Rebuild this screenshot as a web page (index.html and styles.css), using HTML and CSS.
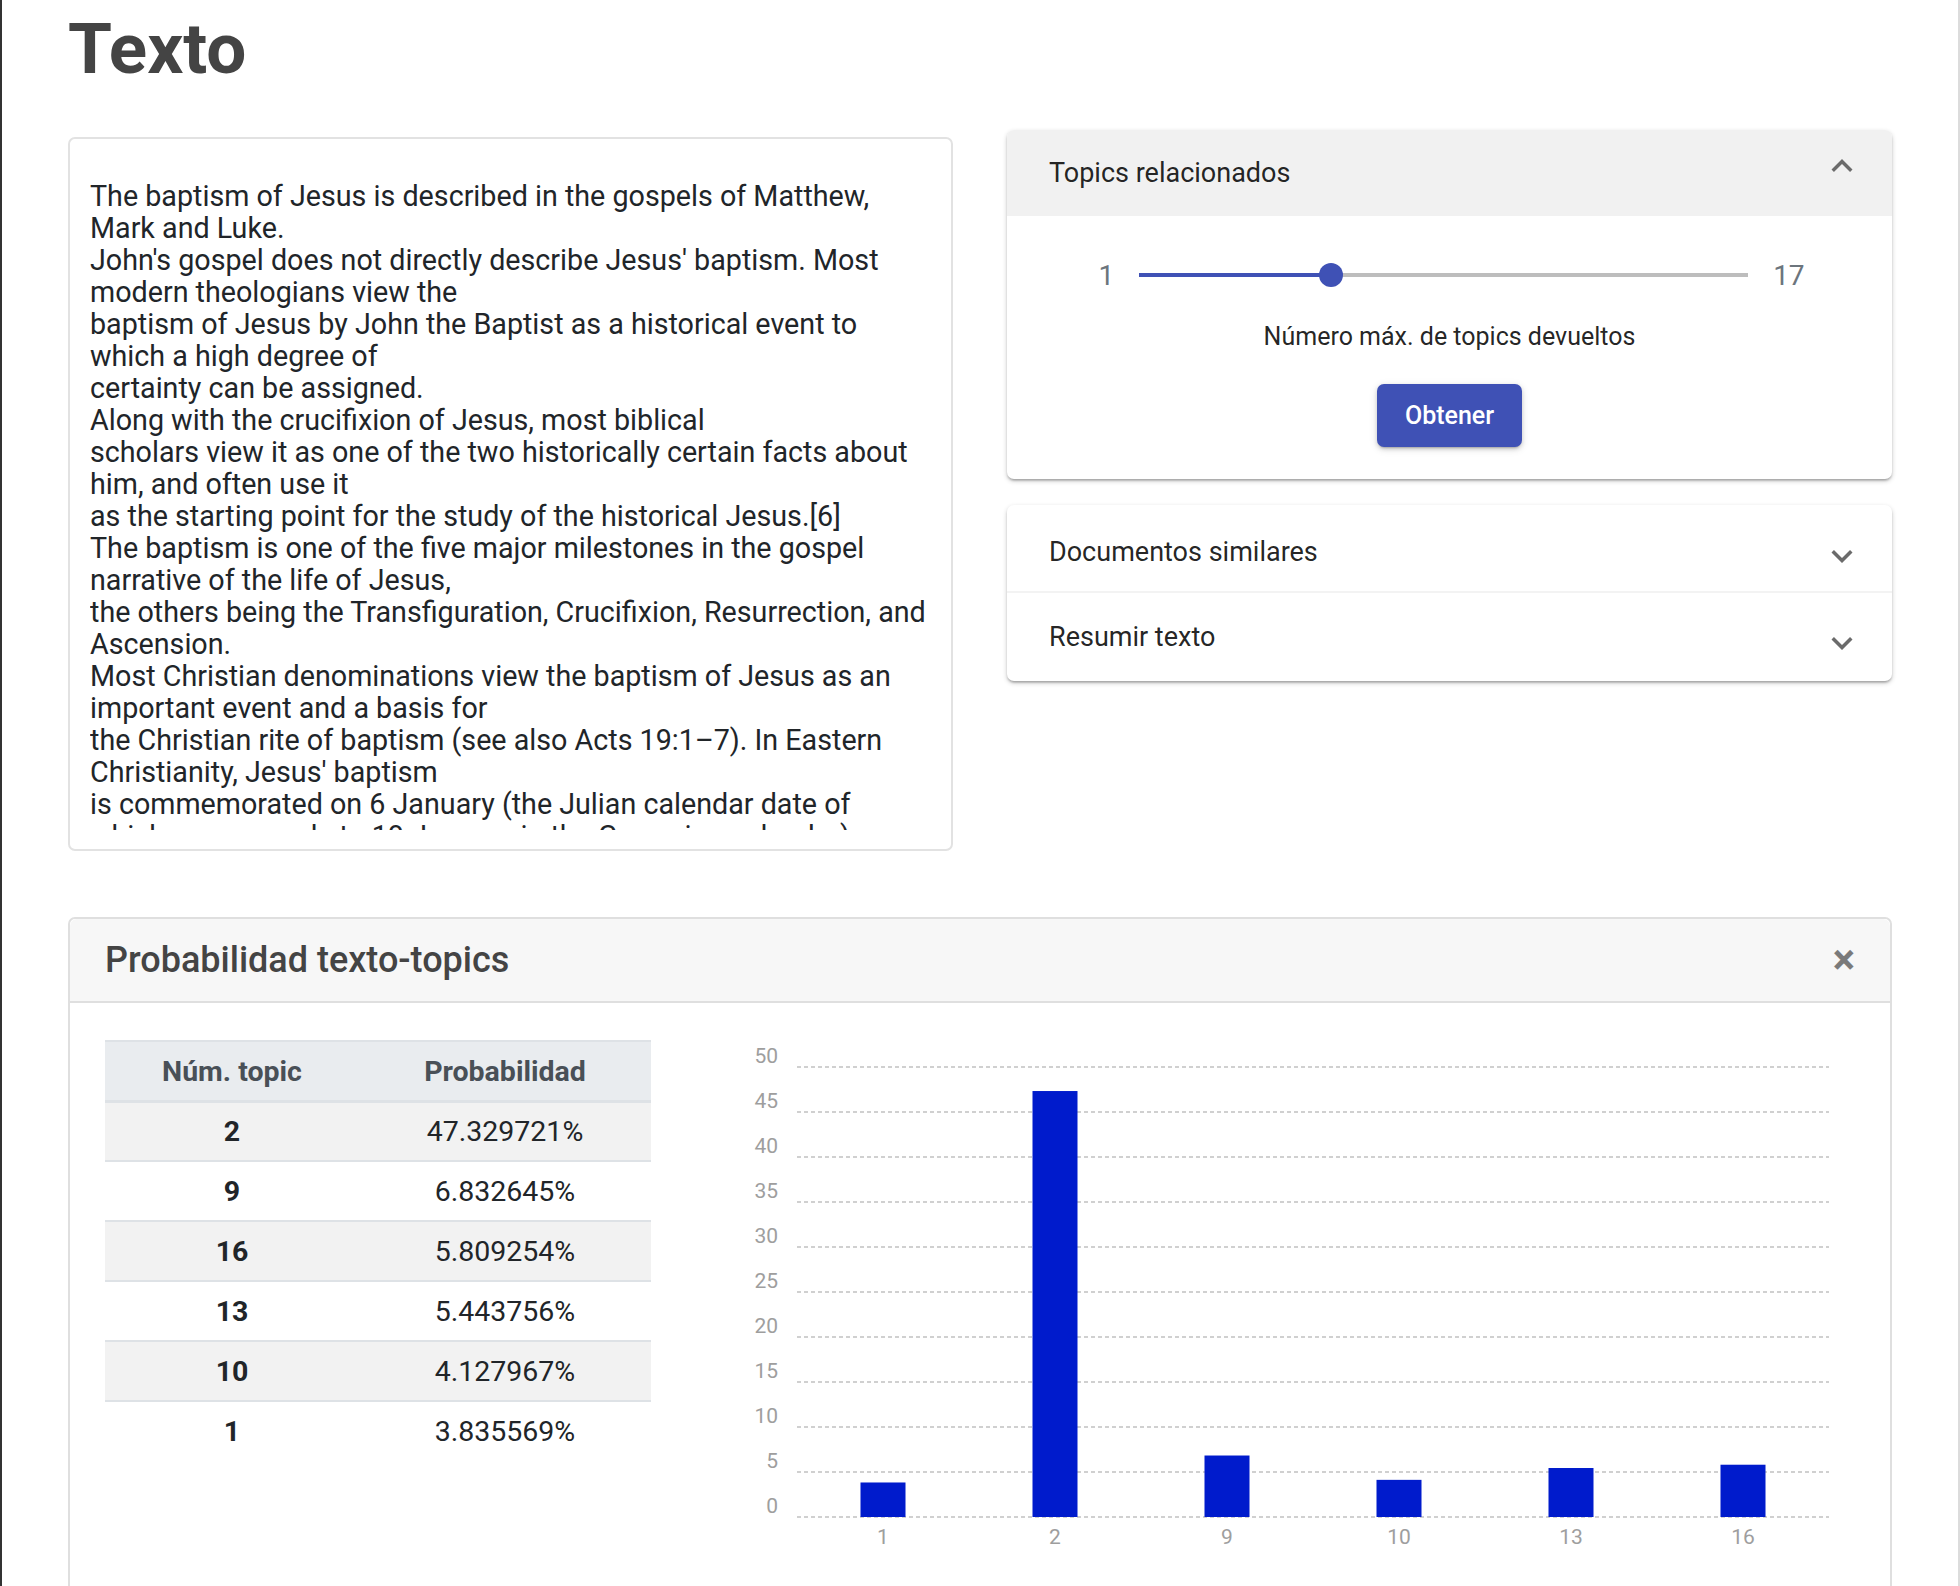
FILE: index.html
```html
<!DOCTYPE html>
<html lang="es">
<head>
<meta charset="utf-8">
<title>Texto</title>
<link rel="stylesheet" href="styles.css">
</head>
<body>
<main class="page">
  <h1 class="title">Texto</h1>

  <div class="top-row">
    <div class="text-card">
      <div class="text-scroll">The baptism of Jesus is described in the gospels of Matthew,<br>Mark and Luke.<br>John's gospel does not directly describe Jesus' baptism. Most<br>modern theologians view the<br>baptism of Jesus by John the Baptist as a historical event to<br>which a high degree of<br>certainty can be assigned.<br>Along with the crucifixion of Jesus, most biblical<br>scholars view it as one of the two historically certain facts about<br>him, and often use it<br>as the starting point for the study of the historical Jesus.[6]<br>The baptism is one of the five major milestones in the gospel<br>narrative of the life of Jesus,<br>the others being the Transfiguration, Crucifixion, Resurrection, and<br>Ascension.<br>Most Christian denominations view the baptism of Jesus as an<br>important event and a basis for<br>the Christian rite of baptism (see also Acts 19:1–7). In Eastern<br>Christianity, Jesus' baptism<br>is commemorated on 6 January (the Julian calendar date of<br>which corresponds to 19 January in the Gregorian calendar).</div>
    </div>

    <div class="side">
      <section class="panel-group">
        <div class="summary summary-open">
          <span>Topics relacionados</span>
          <svg class="chev chev-up" viewBox="0 0 24 24" width="42" height="42"><path d="M16.59 8.59L12 13.17 7.41 8.59 6 10l6 6 6-6z"/></svg>
        </div>
        <div class="details">
          <div class="slider-row">
            <span class="slider-lbl">1</span>
            <div class="slider">
              <div class="slider-fill" style="width:31.25%"></div>
              <div class="slider-thumb" style="left:31.25%"></div>
            </div>
            <span class="slider-lbl">17</span>
          </div>
          <p class="caption">Número máx. de topics devueltos</p>
          <button class="btn">Obtener</button>
        </div>
      </section>

      <section class="panel-group">
        <div class="summary summary-first">
          <span>Documentos similares</span>
          <svg class="chev chev-down" viewBox="0 0 24 24" width="42" height="42"><path d="M16.59 8.59L12 13.17 7.41 8.59 6 10l6 6 6-6z"/></svg>
        </div>
        <div class="summary summary-last">
          <span>Resumir texto</span>
          <svg class="chev chev-down" viewBox="0 0 24 24" width="42" height="42"><path d="M16.59 8.59L12 13.17 7.41 8.59 6 10l6 6 6-6z"/></svg>
        </div>
      </section>
    </div>
  </div>

  <div class="result-card">
    <div class="result-header">
      <h5 class="result-title">Probabilidad texto-topics</h5>
      <button class="close">×</button>
    </div>
    <div class="result-body">
      <table class="prob-table">
        <thead>
          <tr><th class="c1">Núm. topic</th><th class="c2">Probabilidad</th></tr>
        </thead>
        <tbody>
          <tr><th>2</th><td>47.329721%</td></tr>
          <tr><th>9</th><td>6.832645%</td></tr>
          <tr><th>16</th><td>5.809254%</td></tr>
          <tr><th>13</th><td>5.443756%</td></tr>
          <tr><th>10</th><td>4.127967%</td></tr>
          <tr><th>1</th><td>3.835569%</td></tr>
        </tbody>
      </table>

      <svg class="chart" width="1155" height="560" viewBox="0 0 1155 560">
        <g class="grid">
          <line x1="97" x2="1129" y1="27" y2="27"/>
          <line x1="97" x2="1129" y1="72" y2="72"/>
          <line x1="97" x2="1129" y1="117" y2="117"/>
          <line x1="97" x2="1129" y1="162" y2="162"/>
          <line x1="97" x2="1129" y1="207" y2="207"/>
          <line x1="97" x2="1129" y1="252" y2="252"/>
          <line x1="97" x2="1129" y1="297" y2="297"/>
          <line x1="97" x2="1129" y1="342" y2="342"/>
          <line x1="97" x2="1129" y1="387" y2="387"/>
          <line x1="97" x2="1129" y1="432" y2="432"/>
          <line x1="97" x2="1129" y1="477" y2="477"/>
        </g>
        <g class="ylab">
          <text x="78" y="23">50</text>
          <text x="78" y="68">45</text>
          <text x="78" y="113">40</text>
          <text x="78" y="158">35</text>
          <text x="78" y="203">30</text>
          <text x="78" y="248">25</text>
          <text x="78" y="293">20</text>
          <text x="78" y="338">15</text>
          <text x="78" y="383">10</text>
          <text x="78" y="428">5</text>
          <text x="78" y="473">0</text>
        </g>
        <g class="bars">
          <rect x="160.5" y="442.48" width="45" height="34.52"/>
          <rect x="332.5" y="51.03" width="45" height="425.97"/>
          <rect x="504.5" y="415.51" width="45" height="61.49"/>
          <rect x="676.5" y="439.85" width="45" height="37.15"/>
          <rect x="848.5" y="428.01" width="45" height="48.99"/>
          <rect x="1020.5" y="424.72" width="45" height="52.28"/>
        </g>
        <g class="xlab">
          <text x="183" y="504">1</text>
          <text x="355" y="504">2</text>
          <text x="527" y="504">9</text>
          <text x="699" y="504">10</text>
          <text x="871" y="504">13</text>
          <text x="1043" y="504">16</text>
        </g>
      </svg>
    </div>
  </div>
</main>
</body>
</html>
```

FILE: styles.css
```css
html {
  overflow: hidden;
}

body {
  margin: 0;
  min-height: 100vh;
  box-sizing: border-box;
  border-left: 2px solid #333;
  border-right: 2px solid #dcdcdc;
  background: #fff;
  color: #212529;
  font-family: Roboto, "Noto Sans", "Liberation Sans", sans-serif;
}

.page {
  padding: 4px 66px 0 66px;
}

.title {
  margin: 0;
  font-size: 71px;
  line-height: 90px;
  font-weight: 700;
  color: #444;
}

.top-row {
  display: grid;
  grid-template-columns: 1fr 1fr;
  column-gap: 54px;
  align-items: start;
  margin-top: 36px;
}

/* ---------- text card ---------- */
.text-card {
  margin-top: 7px;
  height: 714px;
  box-sizing: border-box;
  border: 2px solid #e2e2e2;
  border-radius: 7px;
  padding: 41px 20px 19px;
  background: #fff;
}

.text-scroll {
  height: 650px;
  overflow: hidden;
  font-size: 28.7px;
  line-height: 32px;
  white-space: nowrap;
  color: #212529;
}

/* ---------- expansion panels ---------- */
.panel-group {
  background: #fff;
  border-radius: 7px;
  overflow: hidden;
  box-shadow: 0 2px 5px rgba(0, 0, 0, 0.2), 0 2px 2px rgba(0, 0, 0, 0.14), 0 3px 2px -2px rgba(0, 0, 0, 0.12);
}

.panel-group + .panel-group {
  margin-top: 26px;
}

.summary {
  display: flex;
  align-items: center;
  justify-content: space-between;
  height: 86px;
  padding: 0 29px 0 42px;
  font-size: 27px;
  color: rgba(0, 0, 0, 0.87);
}

.summary-open {
  background: #f1f1f1;
}

.summary-first {
  height: 78px;
  padding-top: 8px;
}

.summary-last {
  height: 88px;
  border-top: 2px solid #f3f3f3;
}

.chev {
  fill: #6b6b6b;
}

.chev-up {
  transform: rotate(180deg);
  margin-bottom: 14px;
}

.chev-down {
  margin-top: 12px;
}

.summary-first .chev-down {
  margin-top: 8px;
}

.details {
  display: flex;
  flex-direction: column;
  align-items: center;
  padding: 39px 0 32px;
}

.slider-row {
  display: flex;
  align-items: center;
  gap: 25px;
  height: 40px;
  padding-left: 4px;
}

.slider-lbl {
  font-size: 28px;
  color: #6c757d;
}

.slider {
  position: relative;
  width: 609px;
  height: 4px;
  background: #bdbdbd;
}

.slider-fill {
  height: 100%;
  background: #3f51b5;
}

.slider-thumb {
  position: absolute;
  top: 50%;
  width: 24px;
  height: 24px;
  margin: -12px 0 0 -10px;
  border-radius: 50%;
  background: #3f51b5;
}

.caption {
  margin: 27px 0 0;
  font-size: 25px;
  line-height: 30px;
  color: rgba(0, 0, 0, 0.87);
}

.btn {
  margin-top: 32px;
  height: 63px;
  padding: 0 28px;
  border: none;
  border-radius: 7px;
  background: #3f51b5;
  color: #fff;
  font-family: Roboto, "Noto Sans", sans-serif;
  font-size: 25px;
  font-weight: 500;
  box-shadow: 0 3px 2px -2px rgba(0, 0, 0, 0.2), 0 2px 4px rgba(0, 0, 0, 0.14), 0 2px 9px rgba(0, 0, 0, 0.12);
}

/* ---------- result card ---------- */
.result-card {
  margin-top: 66px;
  border: 2px solid #dfdfdf;
  border-radius: 7px;
  background: #fff;
}

.result-header {
  display: flex;
  align-items: center;
  justify-content: space-between;
  height: 82px;
  padding: 0 35px;
  background: #f7f7f7;
  border-bottom: 2px solid #dfdfdf;
  border-radius: 7px 7px 0 0;
}

.result-title {
  margin: 0;
  font-size: 36px;
  font-weight: 500;
  color: #444;
}

.close {
  padding: 0;
  border: 0;
  background: none;
  font-family: Roboto, "Noto Sans", sans-serif;
  font-size: 42px;
  font-weight: 700;
  line-height: 1;
  color: #000;
  opacity: 0.5;
}

.result-body {
  display: flex;
  align-items: flex-start;
  padding: 37px 35px;
}

.prob-table {
  width: 546px;
  flex: none;
  border-collapse: separate;
  border-spacing: 0;
  font-size: 28.5px;
  text-align: center;
}

.prob-table th,
.prob-table td {
  height: 58px;
  padding: 0;
  border-top: 2px solid #dee2e6;
  vertical-align: middle;
}

.prob-table thead th {
  background: #e9ecef;
  color: #495057;
  font-weight: 700;
}

.prob-table .c1 {
  width: 254px;
}

.prob-table tbody tr:first-child th,
.prob-table tbody tr:first-child td {
  height: 57px;
  border-top-width: 3px;
}

.prob-table tbody th {
  font-weight: 700;
  color: #212529;
}

.prob-table tbody td {
  font-weight: 400;
  color: #212529;
}

.prob-table tbody tr:nth-child(odd) {
  background: #f2f2f2;
}

.chart {
  flex: none;
  margin-left: 49px;
  font-family: Roboto, "Noto Sans", sans-serif;
}

.grid line {
  stroke: #d0d0d0;
  stroke-width: 2;
  stroke-dasharray: 4 3;
}

.ylab text {
  font-size: 21px;
  fill: #9e9e9e;
  text-anchor: end;
}

.xlab text {
  font-size: 21px;
  fill: #9e9e9e;
  text-anchor: middle;
}

.bars rect {
  fill: #001bcc;
}
```
